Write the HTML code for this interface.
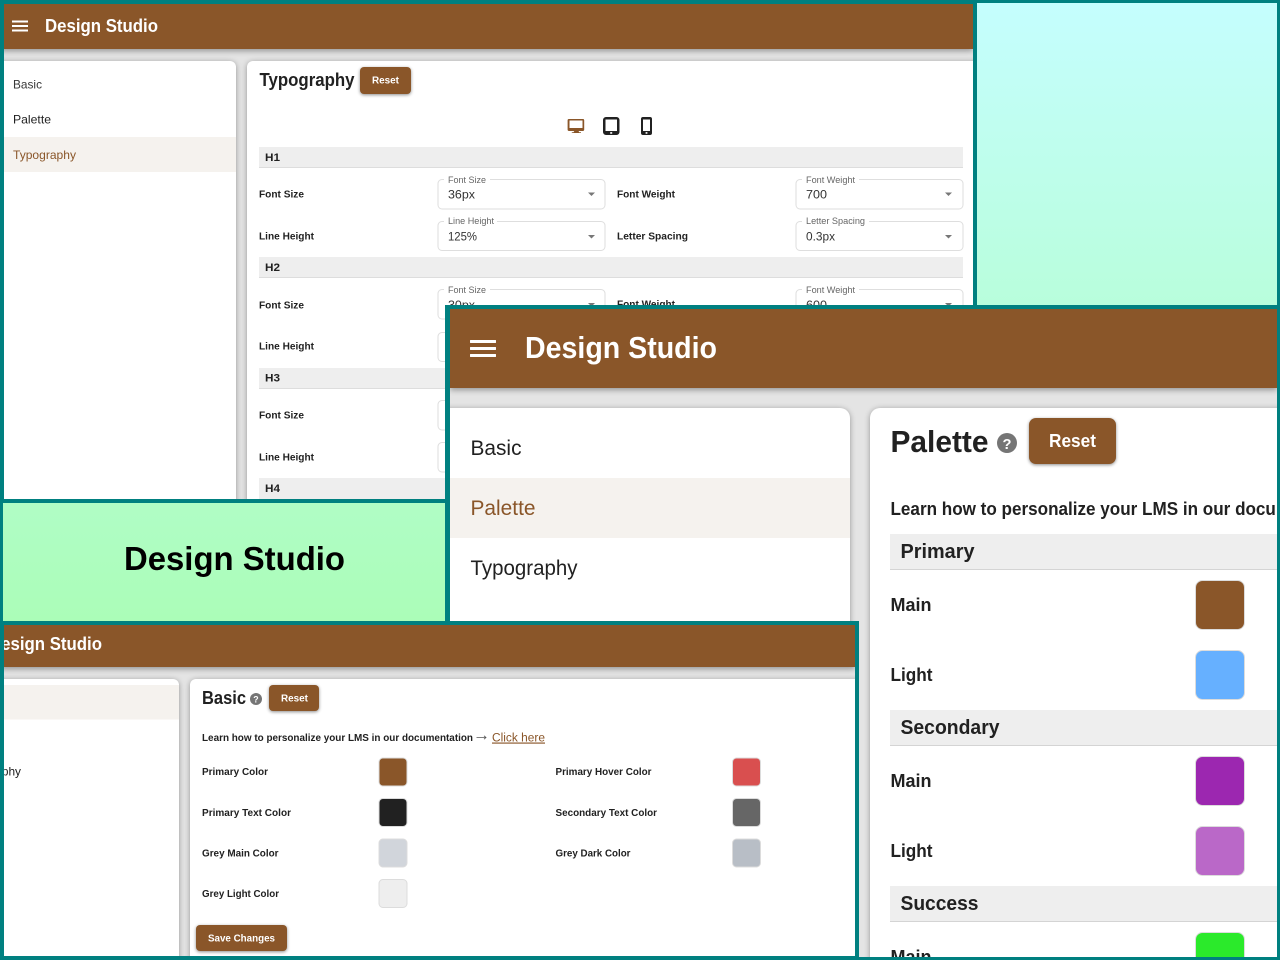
<!DOCTYPE html>
<html lang="en"><head><meta charset="utf-8"><title>Design Studio</title>
<style>
html,body{margin:0;padding:0;width:1280px;height:960px;overflow:hidden;background:#008080}
svg{display:block;position:absolute;left:0;top:0}
text{font-family:"Liberation Sans",sans-serif;fill:#212121}
.b{font-weight:700}
.w{fill:#fff}
.card{fill:#fff;filter:drop-shadow(0 1px 3px rgba(0,0,0,.35))}
.bar{filter:drop-shadow(0 2px 3px rgba(0,0,0,.35))}
.btn{filter:drop-shadow(0 1px 1.5px rgba(0,0,0,.45))}
.sw{stroke:#dcdcdc;stroke-width:1}
.sel{fill:#fff;stroke:#dedede;stroke-width:1}
</style></head><body>
<svg width="1280" height="960" viewBox="0 0 1280 960" xmlns="http://www.w3.org/2000/svg">
<defs>
<linearGradient id="g" x1="0" y1="3" x2="0" y2="621" gradientUnits="userSpaceOnUse"><stop offset="0" stop-color="#c5fefe"/><stop offset="1" stop-color="#abfdb8"/></linearGradient>
<clipPath id="c1"><rect x="4" y="4" width="969" height="495"/></clipPath>
<clipPath id="c2"><rect x="450" y="309" width="827" height="648"/></clipPath>
<clipPath id="c3"><rect x="4" y="625" width="851" height="331"/></clipPath>
</defs>
<rect width="1280" height="960" fill="#008080"/>
<rect x="3" y="3" width="1274" height="618" fill="url(#g)"/>
<text x="124" y="570" class="b" font-size="33" textLength="221" lengthAdjust="spacingAndGlyphs" style="fill:#000">Design Studio</text>

<!-- panel 1 -->
<rect x="0" y="0" width="977" height="503" fill="#008080"/>
<g clip-path="url(#c1)">
<rect x="4" y="4" width="969" height="495" fill="#e4e4e4"/>
<rect x="-10" y="61" width="246" height="460" rx="6" class="card"/>
<rect x="247" y="61" width="760" height="460" rx="6" class="card"/>
<rect x="0" y="4" width="973" height="45" fill="#8a5629" class="bar"/>
<rect x="12" y="20.500" width="16" height="2" fill="#fff"/><rect x="12" y="25" width="16" height="2" fill="#fff"/><rect x="12" y="29.500" width="16" height="2" fill="#fff"/>
<text x="45" y="32" class="b w" font-size="18" textLength="113" lengthAdjust="spacingAndGlyphs">Design Studio</text>
<text x="13" y="88.500" font-size="12" textLength="29" lengthAdjust="spacingAndGlyphs" fill-opacity=".9">Basic</text>
<text x="13" y="123.500" font-size="12" textLength="38" lengthAdjust="spacingAndGlyphs">Palette</text>
<rect x="4" y="137" width="232" height="35" fill="#f5f2ee"/>
<text x="13" y="159" font-size="12" textLength="63" lengthAdjust="spacingAndGlyphs" style="fill:#8a5629">Typography</text>
<text x="259.500" y="86" class="b" font-size="18" textLength="95" lengthAdjust="spacingAndGlyphs">Typography</text>
<rect x="360" y="67" width="51" height="27" rx="4" fill="#8a5629" class="btn"/>
<text x="372" y="83.500" class="b w" font-size="10" textLength="27" lengthAdjust="spacingAndGlyphs">Reset</text>
<!-- device icons -->
<path fill="#8a5629" fill-rule="evenodd" d="M569 119h14a1.200 1.200 0 0 1 1.200 1.200v9.600a1.200 1.200 0 0 1-1.200 1.200h-4.500l.8 1.200h1.700v.8h-9.200v-.8h1.700l.8-1.200h-5.500a1.200 1.200 0 0 1-1.200-1.200v-9.600a1.200 1.200 0 0 1 1.200-1.200zM569.500 120.500v7.500h13v-7.500z"/>
<path fill="#212121" fill-rule="evenodd" d="M606 117h10.500a3 3 0 0 1 3 3v12a3 3 0 0 1-3 3h-10.500a3 3 0 0 1-3-3v-12a3 3 0 0 1 3-3zM605.500 119.500v11.500h11.500v-11.500zM610.200 132.100h2v1.700h-2z"/>
<path fill="#212121" fill-rule="evenodd" d="M643 117h7a2 2 0 0 1 2 2v14a2 2 0 0 1-2 2h-7a2 2 0 0 1-2-2v-14a2 2 0 0 1 2-2zM643 119.500v11.500h7v-11.500zM645.600 132.100h1.800v1.700h-1.800z"/>
<!-- H1 -->
<rect x="259" y="147" width="704" height="21" fill="#eee"/><rect x="259" y="167" width="704" height="1" fill="#ddd"/>
<text x="265" y="161" class="b" font-size="11" textLength="15" lengthAdjust="spacingAndGlyphs">H1</text>
<text x="259" y="197.500" class="b" font-size="10.500" textLength="45" lengthAdjust="spacingAndGlyphs">Font Size</text>
<rect x="438" y="179.500" width="167" height="29.500" rx="4" class="sel"/><rect x="444" y="177" width="46" height="5" fill="#fff"/>
<text x="448" y="183" font-size="9" textLength="38" lengthAdjust="spacingAndGlyphs" style="fill:#666">Font Size</text>
<text x="448" y="198.500" font-size="12" textLength="27" lengthAdjust="spacingAndGlyphs" style="fill:#333">36px</text>
<path d="M588 192.500h7l-3.500 3.500z" fill="#777"/>
<text x="617" y="197.500" class="b" font-size="10.500" textLength="58" lengthAdjust="spacingAndGlyphs">Font Weight</text>
<rect x="796" y="179.500" width="167" height="29.500" rx="4" class="sel"/><rect x="802" y="177" width="57" height="5" fill="#fff"/>
<text x="806" y="183" font-size="9" textLength="49" lengthAdjust="spacingAndGlyphs" style="fill:#666">Font Weight</text>
<text x="806" y="198.500" font-size="12" textLength="21" lengthAdjust="spacingAndGlyphs" style="fill:#333">700</text>
<path d="M945 192.500h7l-3.500 3.500z" fill="#777"/>
<text x="259" y="239.500" class="b" font-size="10.500" textLength="55" lengthAdjust="spacingAndGlyphs">Line Height</text>
<rect x="438" y="221.500" width="167" height="29" rx="4" class="sel"/><rect x="444" y="219" width="53" height="5" fill="#fff"/>
<text x="448" y="224" font-size="9" textLength="46" lengthAdjust="spacingAndGlyphs" style="fill:#666">Line Height</text>
<text x="448" y="240.500" font-size="12" textLength="29" lengthAdjust="spacingAndGlyphs" style="fill:#333">125%</text>
<path d="M588 235h7l-3.500 3.500z" fill="#777"/>
<text x="617" y="239.500" class="b" font-size="10.500" textLength="71" lengthAdjust="spacingAndGlyphs">Letter Spacing</text>
<rect x="796" y="221.500" width="167" height="29" rx="4" class="sel"/><rect x="802" y="219" width="67" height="5" fill="#fff"/>
<text x="806" y="224" font-size="9" textLength="59" lengthAdjust="spacingAndGlyphs" style="fill:#666">Letter Spacing</text>
<text x="806" y="240.500" font-size="12" textLength="29" lengthAdjust="spacingAndGlyphs" style="fill:#333">0.3px</text>
<path d="M945 235h7l-3.500 3.500z" fill="#777"/>
<!-- H2 -->
<rect x="259" y="257" width="704" height="21" fill="#eee"/><rect x="259" y="277" width="704" height="1" fill="#ddd"/>
<text x="265" y="271" class="b" font-size="11" textLength="15" lengthAdjust="spacingAndGlyphs">H2</text>
<text x="259" y="308.500" class="b" font-size="10.500" textLength="45" lengthAdjust="spacingAndGlyphs">Font Size</text>
<rect x="438" y="289.500" width="167" height="29.500" rx="4" class="sel"/><rect x="444" y="287" width="46" height="5" fill="#fff"/>
<text x="448" y="293" font-size="9" textLength="38" lengthAdjust="spacingAndGlyphs" style="fill:#666">Font Size</text>
<text x="448" y="309" font-size="12" textLength="27" lengthAdjust="spacingAndGlyphs" style="fill:#333">30px</text>
<path d="M588 303h7l-3.500 3.500z" fill="#777"/>
<text x="617" y="307.500" class="b" font-size="10.500" textLength="58" lengthAdjust="spacingAndGlyphs">Font Weight</text>
<rect x="796" y="289.500" width="167" height="29.500" rx="4" class="sel"/><rect x="802" y="287" width="57" height="5" fill="#fff"/>
<text x="806" y="293" font-size="9" textLength="49" lengthAdjust="spacingAndGlyphs" style="fill:#666">Font Weight</text>
<text x="806" y="309" font-size="12" textLength="21" lengthAdjust="spacingAndGlyphs" style="fill:#333">600</text>
<path d="M945 303h7l-3.500 3.500z" fill="#777"/>
<text x="259" y="349.500" class="b" font-size="10.500" textLength="55" lengthAdjust="spacingAndGlyphs">Line Height</text>
<rect x="438" y="332.500" width="60" height="29" rx="4" class="sel"/>
<!-- H3 -->
<rect x="259" y="368" width="704" height="21" fill="#eee"/><rect x="259" y="388" width="704" height="1" fill="#ddd"/>
<text x="265" y="381.500" class="b" font-size="11" textLength="15" lengthAdjust="spacingAndGlyphs">H3</text>
<text x="259" y="418.500" class="b" font-size="10.500" textLength="45" lengthAdjust="spacingAndGlyphs">Font Size</text>
<rect x="438" y="400.500" width="60" height="29.500" rx="4" class="sel"/>
<text x="259" y="460.500" class="b" font-size="10.500" textLength="55" lengthAdjust="spacingAndGlyphs">Line Height</text>
<rect x="438" y="442.500" width="60" height="29.500" rx="4" class="sel"/>
<!-- H4 -->
<rect x="259" y="478" width="704" height="21" fill="#eee"/>
<text x="265" y="492" class="b" font-size="11" textLength="15" lengthAdjust="spacingAndGlyphs">H4</text>
</g>

<!-- panel 2 -->
<rect x="445" y="305" width="835" height="655" fill="#008080"/>
<g clip-path="url(#c2)">
<rect x="450" y="309" width="827" height="648" fill="#e4e4e4"/>
<rect x="430" y="408" width="420" height="580" rx="10" class="card"/>
<rect x="870" y="408" width="450" height="580" rx="10" class="card"/>
<rect x="450" y="309" width="827" height="79" fill="#8a5629" class="bar"/>
<rect x="470" y="340" width="26" height="3" rx=".5" fill="#fff"/><rect x="470" y="347" width="26" height="3" rx=".5" fill="#fff"/><rect x="470" y="354" width="26" height="3" rx=".5" fill="#fff"/>
<text x="525" y="358" class="b w" font-size="31" textLength="192" lengthAdjust="spacingAndGlyphs">Design Studio</text>
<text x="470.500" y="455" font-size="21" textLength="51" lengthAdjust="spacingAndGlyphs">Basic</text>
<rect x="450" y="478" width="400" height="60" fill="#f5f2ee"/>
<text x="470.500" y="515" font-size="21" textLength="65" lengthAdjust="spacingAndGlyphs" style="fill:#8a5629">Palette</text>
<text x="470.500" y="575" font-size="21" textLength="107" lengthAdjust="spacingAndGlyphs">Typography</text>
<text x="890.500" y="452" class="b" font-size="31" textLength="98" lengthAdjust="spacingAndGlyphs">Palette</text>
<circle cx="1007" cy="443" r="10" fill="#757575"/>
<text x="1002.500" y="449" class="b w" font-size="15" textLength="9" lengthAdjust="spacingAndGlyphs">?</text>
<rect x="1029" y="418" width="87" height="46" rx="7" fill="#8a5629" class="btn"/>
<text x="1049" y="447" class="b w" font-size="18" textLength="47" lengthAdjust="spacingAndGlyphs">Reset</text>
<text x="890.500" y="515" class="b" font-size="18" textLength="467" lengthAdjust="spacingAndGlyphs">Learn how to personalize your LMS in our documentation</text>
<rect x="890" y="534" width="400" height="36" fill="#eee"/><rect x="890" y="569" width="400" height="1" fill="#d4d4d4"/>
<text x="900.500" y="558" class="b" font-size="20" textLength="74" lengthAdjust="spacingAndGlyphs">Primary</text>
<text x="890.500" y="611" class="b" font-size="18" textLength="41" lengthAdjust="spacingAndGlyphs">Main</text>
<rect x="1195.500" y="580.500" width="49" height="49" rx="7" fill="#8a5629" class="sw"/>
<text x="890.500" y="681" class="b" font-size="18" textLength="42" lengthAdjust="spacingAndGlyphs">Light</text>
<rect x="1195.500" y="650.500" width="49" height="49" rx="7" fill="#66b0ff" class="sw"/>
<rect x="890" y="710" width="400" height="36" fill="#eee"/><rect x="890" y="745" width="400" height="1" fill="#d4d4d4"/>
<text x="900.500" y="734" class="b" font-size="20" textLength="99" lengthAdjust="spacingAndGlyphs">Secondary</text>
<text x="890.500" y="787" class="b" font-size="18" textLength="41" lengthAdjust="spacingAndGlyphs">Main</text>
<rect x="1195.500" y="756.500" width="49" height="49" rx="7" fill="#9c27b0" class="sw"/>
<text x="890.500" y="857" class="b" font-size="18" textLength="42" lengthAdjust="spacingAndGlyphs">Light</text>
<rect x="1195.500" y="826.500" width="49" height="49" rx="7" fill="#ba68c8" class="sw"/>
<rect x="890" y="886" width="400" height="36" fill="#eee"/><rect x="890" y="921" width="400" height="1" fill="#d4d4d4"/>
<text x="900.500" y="910" class="b" font-size="20" textLength="78" lengthAdjust="spacingAndGlyphs">Success</text>
<text x="890.500" y="963" class="b" font-size="18" textLength="41" lengthAdjust="spacingAndGlyphs">Main</text>
<rect x="1195.500" y="932.500" width="49" height="49" rx="7" fill="#2bea2b" class="sw"/>
</g>

<!-- panel 3 -->
<rect x="0" y="621" width="859" height="339" fill="#008080"/>
<g clip-path="url(#c3)">
<rect x="4" y="625" width="851" height="331" fill="#e4e4e4"/>
<rect x="-60" y="679" width="239" height="300" rx="6" class="card"/>
<rect x="190" y="679" width="700" height="300" rx="6" class="card"/>
<rect x="0" y="625" width="855" height="42" fill="#8a5629" class="bar"/>
<text x="-11" y="650" class="b w" font-size="18" textLength="113" lengthAdjust="spacingAndGlyphs">Design Studio</text>
<rect x="0" y="685" width="179" height="34.500" fill="#f5f2ee"/>
<text x="-41" y="775.500" font-size="12" textLength="62" lengthAdjust="spacingAndGlyphs">Typography</text>
<text x="202" y="704" class="b" font-size="18" textLength="44" lengthAdjust="spacingAndGlyphs">Basic</text>
<circle cx="256" cy="699" r="6" fill="#757575"/>
<text x="253.300" y="702.500" class="b w" font-size="9" textLength="5.400" lengthAdjust="spacingAndGlyphs">?</text>
<rect x="269" y="685" width="50" height="26" rx="4" fill="#8a5629" class="btn"/>
<text x="281" y="701.500" class="b w" font-size="10" textLength="27" lengthAdjust="spacingAndGlyphs">Reset</text>
<text x="202" y="741" class="b" font-size="10.500" textLength="271" lengthAdjust="spacingAndGlyphs">Learn how to personalize your LMS in our documentation</text>
<path d="M476.500 737.500h9.500M484 735.800l2 1.700-2 1.700" fill="none" stroke="#555" stroke-width=".8"/>
<text x="492" y="741.500" font-size="11.500" textLength="53" lengthAdjust="spacingAndGlyphs" text-decoration="underline" style="fill:#8a5629">Click here</text>
<text x="202" y="775" class="b" font-size="10" textLength="66" lengthAdjust="spacingAndGlyphs">Primary Color</text>
<rect x="379" y="758" width="28" height="28" rx="4" fill="#8a5629" class="sw"/>
<text x="202" y="816" class="b" font-size="10" textLength="89" lengthAdjust="spacingAndGlyphs">Primary Text Color</text>
<rect x="379" y="798.500" width="28" height="28" rx="4" fill="#212121" class="sw"/>
<text x="202" y="856.500" class="b" font-size="10" textLength="76.500" lengthAdjust="spacingAndGlyphs">Grey Main Color</text>
<rect x="379" y="839" width="28" height="28" rx="4" fill="#d1d5db" class="sw"/>
<text x="202" y="897" class="b" font-size="10" textLength="77" lengthAdjust="spacingAndGlyphs">Grey Light Color</text>
<rect x="379" y="879.500" width="28" height="28" rx="4" fill="#eeeeee" class="sw"/>
<text x="555.500" y="775" class="b" font-size="10" textLength="96" lengthAdjust="spacingAndGlyphs">Primary Hover Color</text>
<rect x="732.500" y="758" width="28" height="28" rx="4" fill="#d94f4f" class="sw"/>
<text x="555.500" y="816" class="b" font-size="10" textLength="101.500" lengthAdjust="spacingAndGlyphs">Secondary Text Color</text>
<rect x="732.500" y="798.500" width="28" height="28" rx="4" fill="#666666" class="sw"/>
<text x="555.500" y="856.500" class="b" font-size="10" textLength="75" lengthAdjust="spacingAndGlyphs">Grey Dark Color</text>
<rect x="732.500" y="839" width="28" height="28" rx="4" fill="#b8bec6" class="sw"/>
<rect x="196" y="925" width="91" height="26" rx="4" fill="#8a5629" class="btn"/>
<text x="208" y="941.500" class="b w" font-size="10.500" textLength="67" lengthAdjust="spacingAndGlyphs">Save Changes</text>
</g>
</svg>
</body></html>
